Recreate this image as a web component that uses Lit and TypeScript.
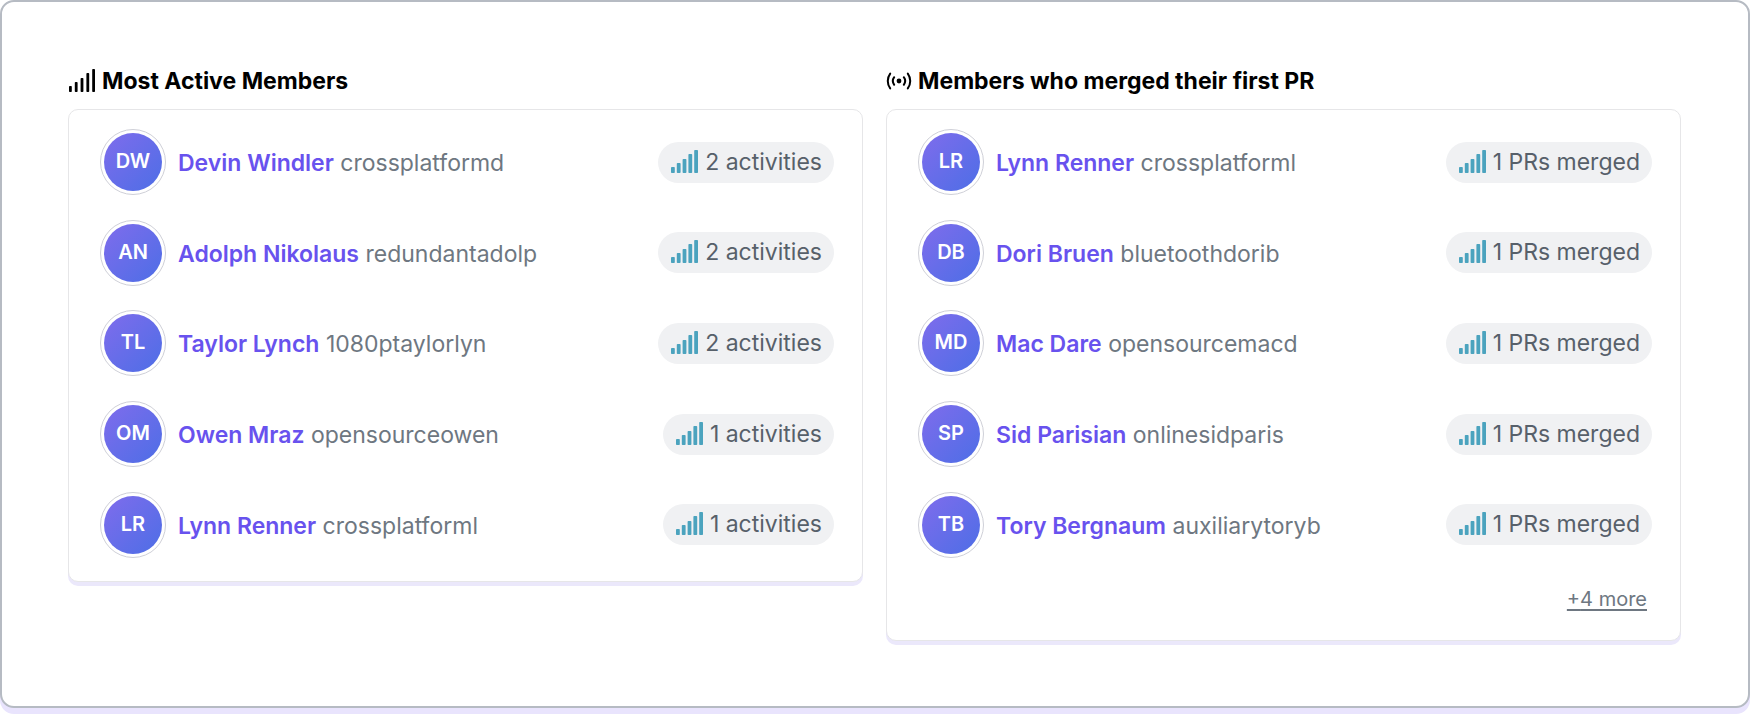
import { LitElement, html, css, svg } from "lit";
import { customElement, property } from "lit/decorators.js";

interface Member {
  name: string;
  handle: string;
  initials: string;
  badge: string;
}

const active: Member[] = [
  { name: "Devin Windler", handle: "crossplatformd", initials: "DW", badge: "2 activities" },
  { name: "Adolph Nikolaus", handle: "redundantadolp", initials: "AN", badge: "2 activities" },
  { name: "Taylor Lynch", handle: "1080ptaylorlyn", initials: "TL", badge: "2 activities" },
  { name: "Owen Mraz", handle: "opensourceowen", initials: "OM", badge: "1 activities" },
  { name: "Lynn Renner", handle: "crossplatforml", initials: "LR", badge: "1 activities" },
];

const merged: Member[] = [
  { name: "Lynn Renner", handle: "crossplatforml", initials: "LR", badge: "1 PRs merged" },
  { name: "Dori Bruen", handle: "bluetoothdorib", initials: "DB", badge: "1 PRs merged" },
  { name: "Mac Dare", handle: "opensourcemacd", initials: "MD", badge: "1 PRs merged" },
  { name: "Sid Parisian", handle: "onlinesidparis", initials: "SP", badge: "1 PRs merged" },
  { name: "Tory Bergnaum", handle: "auxiliarytoryb", initials: "TB", badge: "1 PRs merged" },
];

const barShapes = (w: number) =>
  [6, 10, 14, 19, 23].map(
    (h, i) => svg`<rect x=${1 + i * 5.8} y=${23 - h} width=${w} height=${h} rx="0.8"></rect>`
  );

const bars = (w: number) => html`
  <svg class="icon" viewBox="0 0 29 24" width="29" height="24" fill="currentColor" aria-hidden="true">
    ${barShapes(w)}
  </svg>
`;

const broadcast = html`
  <svg class="icon" viewBox="0 0 27 24" width="27" height="24" fill="none" stroke="currentColor"
    stroke-width="2" stroke-linecap="round" aria-hidden="true">
    <circle cx="13" cy="12" r="2.4" fill="currentColor" stroke="none"></circle>
    <path d="M8.2 8.2a6.4 6.4 0 0 0 0 7.6M17.8 8.2a6.4 6.4 0 0 1 0 7.6"></path>
    <path d="M4.2 4.6a12.5 12.5 0 0 0 0 14.8M21.8 4.6a12.5 12.5 0 0 1 0 14.8"></path>
  </svg>
`;

@customElement("member-card")
class MemberCard extends LitElement {
  @property() heading = "";
  @property() icon = "bars";
  @property({ attribute: false }) members: Member[] = [];
  @property({ type: Number }) more = 0;

  static styles = css`
    :host {
      display: block;
      min-width: 0;
    }
    h2 {
      display: flex;
      align-items: center;
      gap: 5px;
      margin: 0 0 12px;
      font-size: 23px;
      line-height: 32px;
      font-weight: 700;
      color: #000;
    }
    .icon {
      flex: none;
      display: block;
    }
    .card {
      border: 1px solid #e6e6e8;
      border-radius: 10px;
      box-shadow: 0 4px 0 #ebe8fb;
      background: #fff;
      padding: 7px 28px 11px 31px;
    }
    ul {
      list-style: none;
      margin: 0;
      padding: 0;
      display: grid;
      grid-auto-rows: 1fr;
      min-height: 453px;
    }
    li {
      display: flex;
      align-items: center;
      gap: 12px;
    }
    .avatar {
      flex: none;
      padding: 3px;
      border: 1px solid #cfd0d8;
      border-radius: 50%;
    }
    .initials {
      display: block;
      width: 58px;
      border-radius: 50%;
      background: linear-gradient(135deg, #7f6cec, #4d6ee6);
      color: #fff;
      font-size: 20px;
      line-height: 56px;
      padding-bottom: 2px;
      font-weight: 600;
      text-align: center;
    }
    .who {
      flex: 1;
      min-width: 0;
      font-size: 23px;
      line-height: 32px;
      color: #6e7781;
      padding-top: 2px;
    }
    .name {
      color: #6852ee;
      font-weight: 600;
      text-decoration: none;
    }
    .badge {
      display: flex;
      align-items: center;
      gap: 6px;
      padding: 4px 12px 5px;
      border-radius: 21px;
      background: #f0f1f3;
      color: #57606a;
      font-size: 23px;
      line-height: 32px;
      white-space: nowrap;
    }
    .badge .icon {
      color: #4ba3be;
    }
    .more {
      display: flex;
      justify-content: flex-end;
      padding: 14px 5px 15px 0;
      font-size: 20px;
      line-height: 30px;
    }
    .more a {
      color: #6e7781;
      text-underline-offset: 3px;
    }
  `;

  render() {
    return html`
      <h2>${this.icon === "bars" ? bars(2.8) : broadcast}<span>${this.heading}</span></h2>
      <div class="card">
        <ul>
          ${this.members.map(
            (m) => html`<li>
              <span class="avatar"><span class="initials">${m.initials}</span></span>
              <span class="who"><a class="name" href="#">${m.name}</a> ${m.handle}</span>
              <span class="badge">${bars(3.8)}<span>${m.badge}</span></span>
            </li>`
          )}
        </ul>
        ${this.more ? html`<div class="more"><a href="#">+${this.more} more</a></div>` : null}
      </div>
    `;
  }
}

@customElement("app-root")
class AppRoot extends LitElement {
  static styles = css`
    :host {
      display: block;
      padding-bottom: 6px;
      font-family: Inter, "Noto Sans", sans-serif;
    }
    .panel {
      box-sizing: border-box;
      border: 2px solid #b6bbc3;
      border-radius: 14px;
      box-shadow: 0 6px 0 #e9e4fd;
      background: #fff;
      padding: 63px 67px 65px 66px;
      display: grid;
      grid-template-columns: 1fr 1fr;
      gap: 23px;
      align-items: start;
    }
  `;

  render() {
    return html`
      <main class="panel">
        <member-card heading="Most Active Members" .members=${active}></member-card>
        <member-card heading="Members who merged their first PR" icon="broadcast"
          .members=${merged} .more=${4}></member-card>
      </main>
    `;
  }
}
